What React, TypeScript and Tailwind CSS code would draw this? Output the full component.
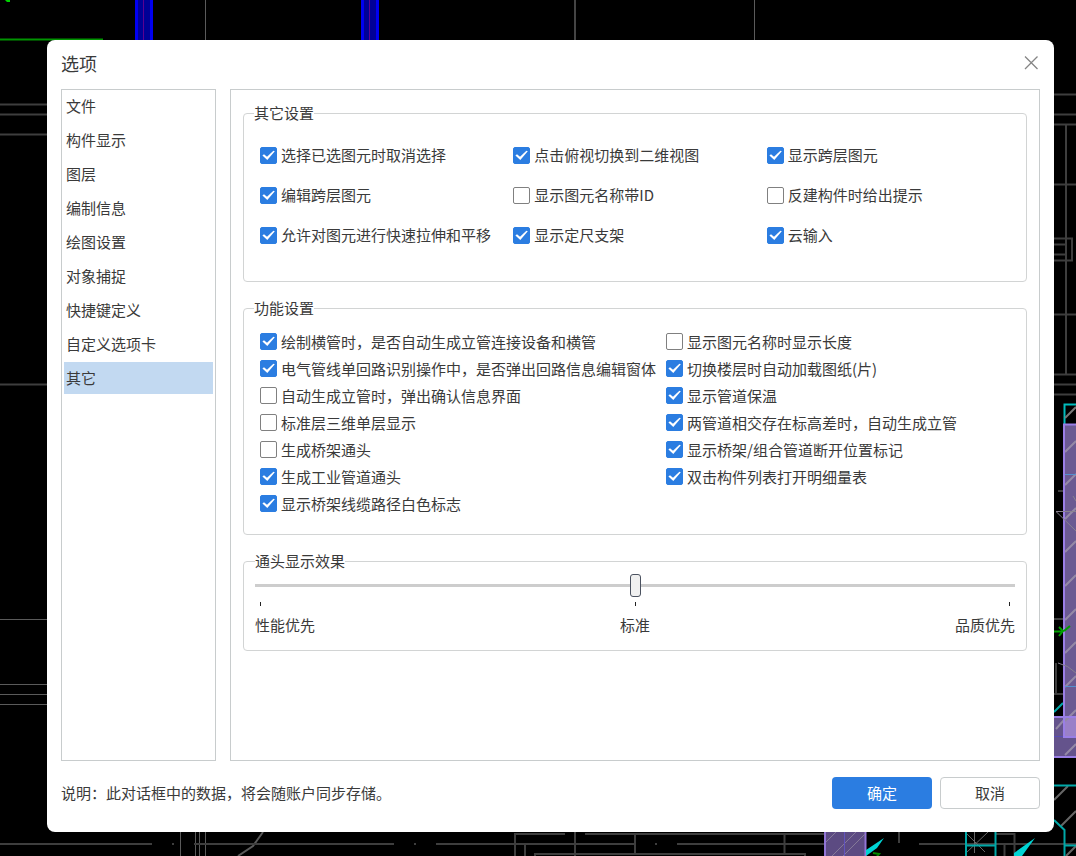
import React, { useState } from 'react';

type Option = { id: string; label: string; on: boolean };

const NAV_ITEMS = ['文件', '构件显示', '图层', '编制信息', '绘图设置', '对象捕捉', '快捷键定义', '自定义选项卡', '其它'];

const OTHER_OPTIONS: Option[] = [
    { id: 'cancel-reselect', label: '选择已选图元时取消选择', on: true },
    { id: 'top-to-2d', label: '点击俯视切换到二维视图', on: true },
    { id: 'show-cross', label: '显示跨层图元', on: true },
    { id: 'edit-cross', label: '编辑跨层图元', on: true },
    { id: 'name-with-id', label: '显示图元名称带ID', on: false },
    { id: 'rebuild-tip', label: '反建构件时给出提示', on: false },
    { id: 'quick-stretch', label: '允许对图元进行快速拉伸和平移', on: true },
    { id: 'show-bracket', label: '显示定尺支架', on: true },
    { id: 'cloud-input', label: '云输入', on: true },
];

const FEATURE_LEFT: Option[] = [
    { id: 'auto-riser', label: '绘制横管时，是否自动生成立管连接设备和横管', on: true },
    { id: 'circuit-form', label: '电气管线单回路识别操作中，是否弹出回路信息编辑窗体', on: true },
    { id: 'riser-confirm', label: '自动生成立管时，弹出确认信息界面', on: false },
    { id: 'std-floor-3d', label: '标准层三维单层显示', on: false },
    { id: 'tray-fitting', label: '生成桥架通头', on: false },
    { id: 'industry-fitting', label: '生成工业管道通头', on: true },
    { id: 'cable-path', label: '显示桥架线缆路径白色标志', on: true },
];

const FEATURE_RIGHT: Option[] = [
    { id: 'name-length', label: '显示图元名称时显示长度', on: false },
    { id: 'auto-load', label: '切换楼层时自动加载图纸(片)', on: true },
    { id: 'insulation', label: '显示管道保温', on: true },
    { id: 'height-riser', label: '两管道相交存在标高差时，自动生成立管', on: true },
    { id: 'break-mark', label: '显示桥架/组合管道断开位置标记', on: true },
    { id: 'dblclick-list', label: '双击构件列表打开明细量表', on: true },
];

const Check: React.FC<{ option: Option; className?: string }> = ({ option, className = '' }) => (
    <div className={`flex items-center ${className}`}>
        <span className="grid shrink-0">
            <input
                id={option.id}
                type="checkbox"
                defaultChecked={option.on}
                className="peer col-start-1 row-start-1 size-[17px] appearance-none rounded-xs border border-[#808080] bg-white checked:border-[#2b7de1] checked:bg-[#2b7de1]"
            />
            <svg
                viewBox="0 0 17 17"
                className="pointer-events-none invisible col-start-1 row-start-1 size-[17px] peer-checked:visible"
                aria-hidden="true"
            >
                <path d="M2.4 8.4 4 7.3 7 9.8 13.4 3.8 14.8 4.3 7.3 13Z" fill="#fff" />
            </svg>
        </span>
        <label htmlFor={option.id} className="pl-1 whitespace-nowrap">
            {option.label}
        </label>
    </div>
);

const Group: React.FC<{ title: string; className?: string; children: React.ReactNode }> = ({
    title,
    className = '',
    children,
}) => (
    <fieldset className={`min-w-0 rounded-sm border border-[#d2d4d4] ${className}`}>
        <legend className="h-5">{title}</legend>
        {children}
    </fieldset>
);

// CAD canvas behind the dialog
const Drawing: React.FC = () => (
    <svg
        viewBox="0 0 1076 856"
        preserveAspectRatio="none"
        className="absolute inset-0 size-full"
        fill="none"
        aria-hidden="true"
    >
        <path d="M0 39.5H103" stroke="#009400" strokeWidth="2" />
        <path d="M5 0h5v2h-3z" fill="#00d000" />
        {[135, 361].map((x) => (
            <g key={x}>
                <rect x={x} width="18" height="41" fill="#0000f0" />
                <rect x={x + 3} width="12" height="41" fill="#000096" />
                <path d={`M${x + 8.5} 0V41`} stroke="#5c0090" />
            </g>
        ))}
        <g stroke="#5a5a5a">
            <path d="M205.5 0V41M754.5 0V41" />
            <path d="M575 0V41" stroke="#444" strokeWidth="2" />
            <path d="M0 619.5H48M0 684.5H48M0 694.5H48M0 704.5H48" />
            <path d="M180.5 832V856M195.5 832V856M199.5 832V856M205.5 832V856" />
            <path d="M263 832 253 846 238 856" strokeWidth="2" />
        </g>
        <g stroke="#3e3e3e" strokeWidth="2">
            <path d="M0 104.5H48M0 114.5H48M0 134.5H48M0 384.5H48" />
            <path d="M1054 94.5H1076M1054 114.5H1076M1054 124.5H1076M1066 124V374M1054 184.5H1076" />
            <path d="M1054 238.5H1072V260.5H1054M1054 244.5H1066M1054 254.5H1066" />
            <path d="M1054 314.5H1076M1054 374.5H1076M1054 384.5H1076M1054 394.5H1076" />
            <path d="M1054 619H1076M1058 491H1069M1056 663V694M1054 694H1076" />
            <path d="M0 844H152M172 844h2M194 844H394M414 844h2M436 844H635M655 844h2M677 844H825M919 844H1076" />
            <path d="M515 856V834H565M585 834H824M525 856V844M575 832V856M635 834V854M535 856V854H805V856M784.5 834V853" />
            <path d="M899 832V843M996 834H1014.5V856M1004.5 844V856" />
        </g>
        <rect x="824" y="832" width="42" height="24" fill="#5c4b82" />
        <path d="M825 832V856M865.5 832V856" stroke="#9175d6" strokeWidth="2" />
        <path d="M826 842 836 832M832 856 856 832M843 856 865 834" stroke="#857a98" />
        <path d="M844.5 832V856" stroke="#6254bd" />
        <path d="M866 850 884 838 877 848 866 856ZM1014 853 1035 838 1022 856H1014Z" fill="#00d4d4" />
        <path d="M873 853l6 1-2 2" stroke="#008a00" strokeWidth="2" />
        <path d="M965 832 985 852M966 853 988 832M974.5 832V853" stroke="#666" />
        <path d="M966 832V856M995.5 832V856M966 845.5H996" stroke="#00a8a8" strokeWidth="2" />
        <path d="M1054 800 1068 786M1061 826 1076 811M1066 856 1076 846" stroke="#666" strokeWidth="2" />
        <path d="M1054 785.5H1076M1054 820 1064.5 830V856M1065 845.5H1076M1054 712 1063 703" stroke="#00a8a8" strokeWidth="2" />
        <path d="M1076 404.5H1064.5V424" stroke="#00bcbc" strokeWidth="2" />
        <path d="M1065 418 1076 407" stroke="#777" strokeWidth="2" />
        <rect x="1054" y="716" width="22" height="41" fill="#64538c" />
        <rect x="1064" y="424" width="12" height="312" fill="#6b5a92" />
        <rect x="1064" y="717" width="12" height="20" fill="#9a80c8" />
        <path
            d="M1065 452 1076 441M1065 485 1076 474M1065 519 1076 508M1065 552 1076 541M1065 586 1076 575M1065 620 1076 609M1065 653 1076 642M1065 687 1076 676M1065 721 1076 710M1056 729 1064 720M1065 755 1076 744"
            stroke="#9489a6"
            strokeWidth="2"
        />
        <path d="M1065 474.5H1076M1065 686.5H1076" stroke="#5390ce" />
        <path d="M1054 736.5H1064" stroke="#574bb5" />
        <path d="M1076 424.5H1064V717M1054 717H1076M1064 717V737H1076M1054 757H1076" stroke="#9a7ee6" strokeWidth="2" />
        <path d="M1076 511.5H1056L1076 531M1073 496l3 5M1058 663Q1068 665 1076 673" stroke="#87818f" />
        <path d="M1054 631.5H1063M1059 627l4 4-4 5M1064 631l6-5" stroke="#009e00" strokeWidth="2" />
    </svg>
);

export default function App() {
    const [active, setActive] = useState('其它');

    return (
        <div
            lang="zh-CN"
            className="relative flex min-h-screen bg-black pt-10 pr-[22px] pb-6 pl-[47px] font-['Noto_Sans_CJK_SC',sans-serif] text-[15px] leading-5 text-[#3a3a3a]"
        >
            <Drawing />
            <div role="dialog" aria-labelledby="dialog-title" className="relative flex min-w-0 flex-1 flex-col rounded-lg bg-white px-3.5">
                <header className="flex h-[49px] items-center justify-between pb-[3px]">
                    <h1 id="dialog-title" className="text-lg">选项</h1>
                    <button type="button" aria-label="关闭" className="flex size-4 items-center justify-center">
                        <svg viewBox="0 0 16 16" className="size-4" stroke="#858585" strokeWidth="1.3" aria-hidden="true">
                            <path d="M1 1.5 13.5 14M13.5 1.5 1 14" />
                        </svg>
                    </button>
                </header>

                <div className="flex flex-1 gap-3.5">
                    <nav className="flex w-[155px] shrink-0 flex-col gap-0.5 border border-[#c8cccd] px-0.5">
                        {NAV_ITEMS.map((item) => (
                            <button
                                key={item}
                                type="button"
                                onClick={() => setActive(item)}
                                className={`h-8 pl-0.5 text-left ${active === item ? 'bg-[#c2d9f1]' : ''}`}
                            >
                                {item}
                            </button>
                        ))}
                    </nav>

                    <main className="flex min-w-0 flex-1 flex-col gap-4 border border-[#c8cccd] px-3 pt-[13px]">
                        <Group title="其它设置" className="pr-1.5 pb-[26px] pl-4 [&>legend]:-ml-1.5">
                            <div className="grid grid-cols-3 pt-3">
                                {OTHER_OPTIONS.map((option) => (
                                    <Check key={option.id} option={option} className="h-10" />
                                ))}
                            </div>
                        </Group>

                        <Group title="功能设置" className="pr-1.5 pb-[17px] pl-4 [&>legend]:-ml-1.5">
                            <div className="grid grid-cols-[auto_1fr] gap-x-2.5 pt-2.5">
                                <div>
                                    {FEATURE_LEFT.map((option) => (
                                        <Check key={option.id} option={option} className="h-[27px]" />
                                    ))}
                                </div>
                                <div>
                                    {FEATURE_RIGHT.map((option) => (
                                        <Check key={option.id} option={option} className="h-[27px]" />
                                    ))}
                                </div>
                            </div>
                        </Group>

                        <Group title="通头显示效果" className="px-[11px] pb-[15px]">
                            <div className="flex flex-col pt-[3px]">
                                <input
                                    type="range"
                                    min={0}
                                    max={2}
                                    defaultValue={1}
                                    aria-label="通头显示效果"
                                    className="h-[22px] w-full appearance-none bg-transparent [&::-webkit-slider-runnable-track]:h-[3px] [&::-webkit-slider-runnable-track]:bg-[#cdcdcd] [&::-webkit-slider-thumb]:-mt-2.5 [&::-webkit-slider-thumb]:h-[23px] [&::-webkit-slider-thumb]:w-[11px] [&::-webkit-slider-thumb]:appearance-none [&::-webkit-slider-thumb]:rounded-[3px] [&::-webkit-slider-thumb]:border [&::-webkit-slider-thumb]:border-[#4b5260] [&::-webkit-slider-thumb]:bg-[#f0f0f0]"
                                />
                                <div className="flex justify-between px-[5px] pt-1.5 pb-[9px]">
                                    <span className="h-1 w-px bg-[#222]" />
                                    <span className="h-1 w-px bg-[#222]" />
                                    <span className="h-1 w-px bg-[#222]" />
                                </div>
                                <div className="flex justify-between">
                                    <span>性能优先</span>
                                    <span>标准</span>
                                    <span>品质优先</span>
                                </div>
                            </div>
                        </Group>
                    </main>
                </div>

                <footer className="flex h-[71px] items-center justify-between pb-[7px]">
                    <p>说明：此对话框中的数据，将会随账户同步存储。</p>
                    <div className="flex gap-2">
                        <button type="button" className="h-8 w-[100px] rounded-sm bg-[#2b7de1] text-white">确定</button>
                        <button type="button" className="h-8 w-[100px] rounded-sm border border-[#c8cccd] bg-white">取消</button>
                    </div>
                </footer>
            </div>
        </div>
    );
}
